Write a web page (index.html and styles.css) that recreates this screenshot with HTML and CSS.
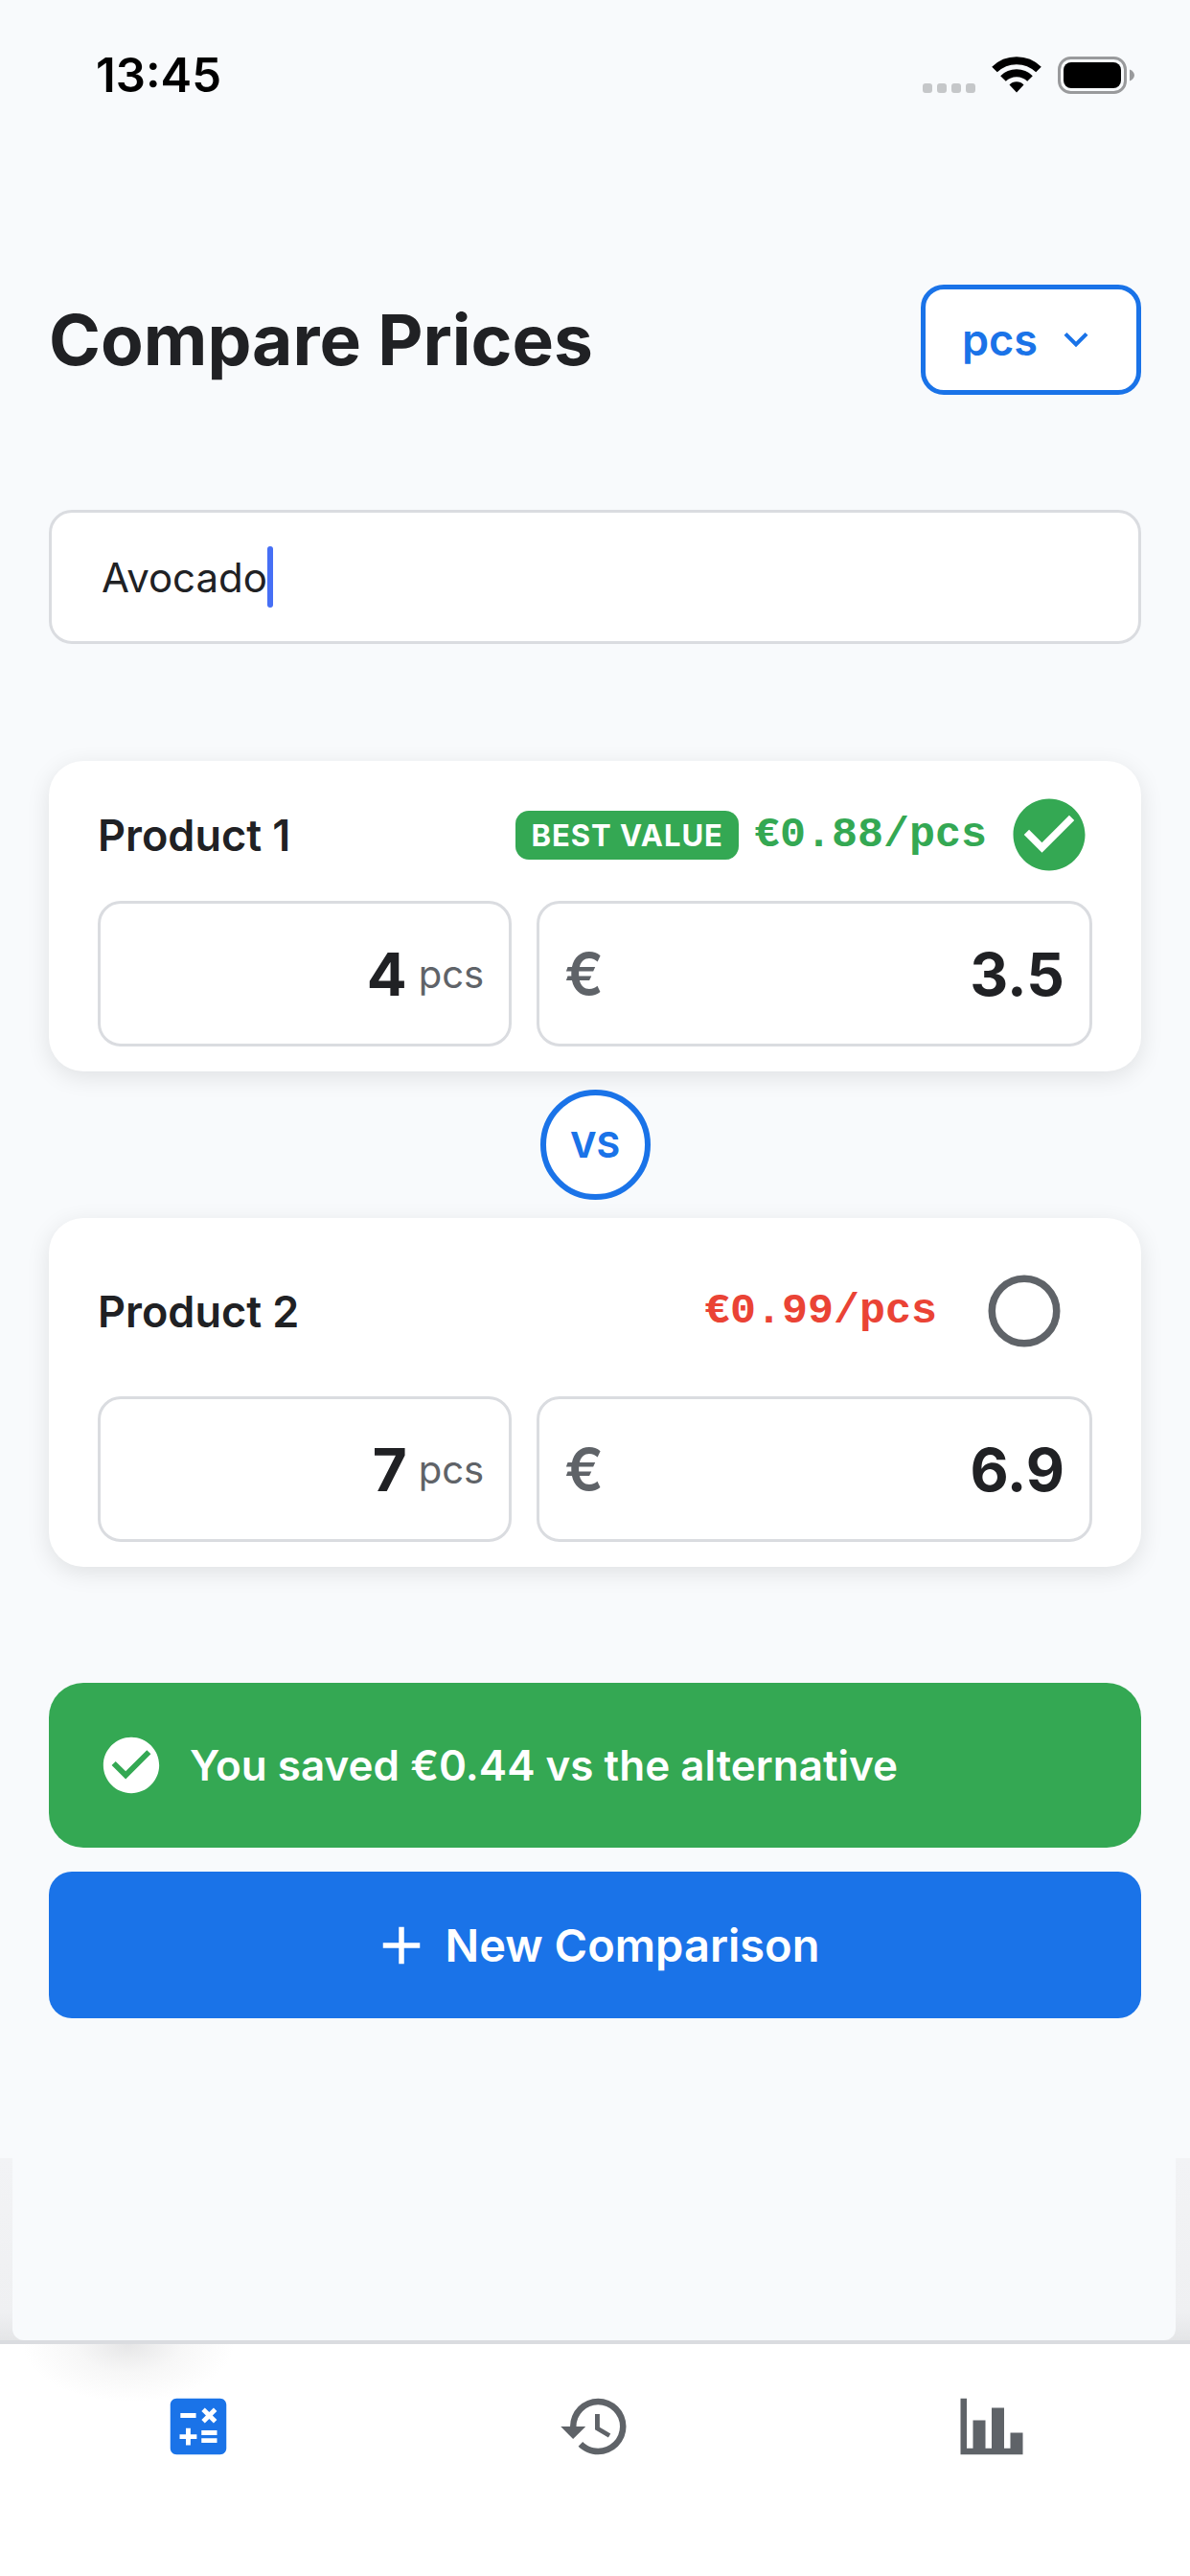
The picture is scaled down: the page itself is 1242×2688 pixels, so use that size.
FILE: index.html
```html
<!DOCTYPE html>
<html lang="en">
<head>
	<meta charset="UTF-8">
	<meta name="viewport" content="width=device-width, initial-scale=1">
	<title>Compare Prices</title>
	<link rel="stylesheet" href="styles.css">
</head>
<body>

	<div class="status-bar">
		<time class="clock">13:45</time>
		<div class="status-icons">
			<svg class="signal" viewBox="0 0 55 40" aria-hidden="true">
				<rect x="0" y="29" width="10" height="10" rx="3"/>
				<rect x="15" y="29" width="10" height="10" rx="3"/>
				<rect x="30" y="29" width="10" height="10" rx="3"/>
				<rect x="45" y="29" width="10" height="10" rx="3"/>
			</svg>
			<svg class="wifi" viewBox="0 0 52 40" aria-hidden="true">
				<path d="M3 14.500A33 33 0 0 1 49 14.500" fill="none" stroke="#000" stroke-width="8"/>
				<path d="M12 24A20 20 0 0 1 40 24" fill="none" stroke="#000" stroke-width="8"/>
				<path d="M18.500 30.500A10.500 10.500 0 0 1 33.500 30.500L26 38.500Z"/>
			</svg>
			<svg class="battery" viewBox="0 0 80 40" aria-hidden="true">
				<rect x="1.500" y="2.500" width="69" height="36" rx="12" fill="none" stroke="#999a9c" stroke-width="3"/>
				<rect x="6" y="7" width="60" height="27" rx="8"/>
				<path d="M75 14.500C78 15.500 80 18 80 20.500S78 25.500 75 26.500Z" fill="#999a9c"/>
			</svg>
		</div>
	</div>

	<main>
		<header class="page-header">
			<h1>Compare Prices</h1>
			<div class="unit-picker">
				<select name="unit" aria-label="Unit">
					<option value="pcs" selected>pcs</option>
					<option value="kg">kg</option>
					<option value="g">g</option>
					<option value="l">l</option>
					<option value="ml">ml</option>
				</select>
				<svg viewBox="0 0 24 24" aria-hidden="true"><path d="M7.410 8.580L12 13.170L16.590 8.580L18 10L12 16L6 10Z"/></svg>
			</div>
		</header>

		<div class="name-field">
			<input type="text" name="name" value="Avocado" aria-label="Product name">
			<span class="caret"></span>
		</div>

		<section class="card">
			<div class="card-header">
				<h2>Product 1</h2>
				<span class="badge">BEST VALUE</span>
				<span class="unit-price good">€0.88/pcs</span>
				<button type="button" class="pick picked" aria-label="Product 1 selected">
					<svg viewBox="0 0 24 24" aria-hidden="true"><path d="M12 2C6.500 2 2 6.500 2 12S6.500 22 12 22 22 17.500 22 12 17.500 2 12 2M10 17L5 12L6.410 10.590L10 14.170L17.590 6.580L19 8L10 17Z"/></svg>
				</button>
			</div>
			<div class="fields">
				<label class="field">
					<input type="text" name="amount-1" value="4" inputmode="decimal" aria-label="Product 1 amount">
					<span class="unit">pcs</span>
				</label>
				<label class="field">
					<span class="currency">€</span>
					<input type="text" name="price-1" value="3.5" inputmode="decimal" aria-label="Product 1 price">
				</label>
			</div>
		</section>

		<div class="vs">VS</div>

		<section class="card">
			<div class="card-header">
				<h2>Product 2</h2>
				<span class="unit-price bad">€0.99/pcs</span>
				<button type="button" class="pick" aria-label="Select product 2">
					<svg viewBox="0 0 24 24" aria-hidden="true"><circle cx="12" cy="12" r="9" fill="none" stroke="currentColor" stroke-width="2"/></svg>
				</button>
			</div>
			<div class="fields">
				<label class="field">
					<input type="text" name="amount-2" value="7" inputmode="decimal" aria-label="Product 2 amount">
					<span class="unit">pcs</span>
				</label>
				<label class="field">
					<span class="currency">€</span>
					<input type="text" name="price-2" value="6.9" inputmode="decimal" aria-label="Product 2 price">
				</label>
			</div>
		</section>

		<div class="savings">
			<svg viewBox="0 0 24 24" aria-hidden="true"><path d="M12 2C6.500 2 2 6.500 2 12S6.500 22 12 22 22 17.500 22 12 17.500 2 12 2M10 17L5 12L6.410 10.590L10 14.170L17.590 6.580L19 8L10 17Z"/></svg>
			<span>You saved €0.44 vs the alternative</span>
		</div>

		<button type="button" class="new-comparison">
			<svg viewBox="0 0 24 24" aria-hidden="true"><path d="M19 13H13V19H11V13H5V11H11V5H13V11H19Z"/></svg>
			New Comparison
		</button>
	</main>

	<div class="sheet-edge"><div class="sheet"></div></div>

	<nav class="tabs">
		<a href="#compare" class="active" aria-label="Compare">
			<svg viewBox="0 0 24 24" aria-hidden="true"><path d="M19 3H5C3.900 3 3 3.900 3 5V19C3 20.100 3.900 21 5 21H19C20.100 21 21 20.100 21 19V5C21 3.900 20.100 3 19 3M13.030 7.060L14.090 6L15.500 7.410L16.910 6L17.970 7.060L16.560 8.470L17.970 9.880L16.910 10.940L15.500 9.530L14.090 10.940L13.030 9.880L14.440 8.470L13.030 7.060M6.250 7.720H11.250V9.220H6.250V7.720M11.500 16H9.500V18H8V16H6V14.500H8V12.500H9.500V14.500H11.500V16M18 17.250H13V15.750H18V17.250M18 14.750H13V13.250H18V14.750Z"/></svg>
		</a>
		<a href="#history" aria-label="History">
			<svg viewBox="0 0 24 24" aria-hidden="true"><path d="M13.500 8H12V13L16.280 15.540L17 14.330L13.500 12.250V8M13 3A9 9 0 0 0 4 12H1L4.960 16.030L9 12H6A7 7 0 0 1 13 5A7 7 0 0 1 20 12A7 7 0 0 1 13 19C11.070 19 9.320 18.210 8.060 16.940L6.640 18.360C8.270 20 10.500 21 13 21A9 9 0 0 0 22 12A9 9 0 0 0 13 3"/></svg>
		</a>
		<a href="#stats" aria-label="Statistics">
			<svg viewBox="0 0 24 24" aria-hidden="true"><path d="M22 21H2V3H4V19H6V10H10V19H12V6H16V19H18V14H22V21Z"/></svg>
		</a>
	</nav>

</body>
</html>
```
FILE: styles.css
```css
* {
	box-sizing: border-box;
}
body {
	margin: 0;
	min-height: 100vh;
	display: flex;
	flex-direction: column;
	background-color: #f8fafc;
	color: #202124;
	font-family: Inter, "Liberation Sans", sans-serif;
	font-size: 45px;
}
h1,
h2 {
	margin: 0;
}
svg {
	display: block;
	flex: none;
	fill: currentColor;
}
input,
select,
button {
	margin: 0;
	padding: 0;
	border: none;
	outline: none;
	background: none;
	color: inherit;
	font: inherit;
}
button,
select {
	cursor: pointer;
}

/* status bar */
.status-bar {
	padding: 0 58px 0 100px;
	height: 156px;
	display: flex;
	align-items: center;
	justify-content: space-between;
	color: #000;
}
.clock {
	font-size: 49px;
	font-weight: 600;
}
.status-icons {
	display: flex;
	gap: 17px;
}
.status-icons svg {
	height: 40px;
}
.signal {
	width: 55px;
	color: #c5c7c9;
}
.wifi {
	width: 52px;
}
.battery {
	width: 80px;
}

main {
	flex: 1;
	padding: 141px 51px 0;
}

/* header */
.page-header {
	margin-bottom: 120px;
	display: flex;
	align-items: center;
	justify-content: space-between;
}
h1 {
	font-size: 73px;
	font-weight: 700;
}
.unit-picker {
	position: relative;
	color: #1a73e8;
}
.unit-picker select {
	padding: 0 102px 0 38px;
	height: 115px;
	border: 5px solid #1a73e8;
	border-radius: 24px;
	background-color: #fff;
	font-weight: 600;
	appearance: none;
}
.unit-picker svg {
	position: absolute;
	top: 32px;
	right: 43px;
	width: 50px;
	pointer-events: none;
}

/* product name */
.name-field {
	position: relative;
	margin-bottom: 122px;
}
.name-field input {
	padding: 0 52px;
	width: 100%;
	height: 140px;
	display: block;
	border: 3px solid #dadce0;
	border-radius: 24px;
	background-color: #fff;
	font-size: 42px;
}
.caret {
	position: absolute;
	top: 38px;
	left: 228px;
	width: 6px;
	height: 64px;
	border-radius: 3px;
	background-color: #466ff5;
}

/* product cards */
.card {
	padding: 26px 51px;
	border-radius: 36px;
	background-color: #fff;
	box-shadow: 0 6px 24px rgba(0, 0, 0, .1);
}
.card-header {
	margin-bottom: 18px;
	display: flex;
	align-items: center;
}
h2 {
	flex: 1;
	font-size: 45px;
	font-weight: 600;
}
.badge {
	margin-right: 16px;
	padding: 0 16px;
	border-radius: 14px;
	background-color: #34a853;
	color: #fff;
	font-size: 31px;
	font-weight: 700;
	line-height: 51px;
	letter-spacing: 1px;
}
.unit-price {
	margin-right: 20px;
	font-family: "Courier New", "Liberation Mono", monospace;
	font-size: 45px;
	font-weight: 700;
}
.good {
	color: #34a853;
}
.bad {
	color: #ea4335;
}
.pick {
	padding: 26px;
	color: #5f6368;
}
.pick svg {
	width: 90px;
}
.picked {
	padding: 6px 0;
	color: #34a853;
}
.fields {
	display: grid;
	grid-template-columns: minmax(0, 41fr) minmax(0, 55fr);
	gap: 26px;
}
.field {
	padding: 0 26px;
	height: 152px;
	display: flex;
	align-items: center;
	border: 3px solid #dadce0;
	border-radius: 24px;
}
.field input {
	flex: 1;
	min-width: 0;
	font-size: 62px;
	font-weight: 700;
	text-align: right;
}
.unit {
	margin-left: 12px;
	color: #5f6368;
	font-size: 40px;
}
.currency {
	color: #5f6368;
	font-size: 60px;
	font-weight: 600;
}
.vs {
	margin: 19px auto;
	width: 115px;
	height: 115px;
	display: flex;
	align-items: center;
	justify-content: center;
	border: 6px solid #1a73e8;
	border-radius: 50%;
	background-color: #fff;
	color: #1a73e8;
	font-size: 37px;
	font-weight: 700;
}

/* result */
.savings {
	margin: 121px 0 25px;
	padding: 51px;
	display: flex;
	align-items: center;
	gap: 26px;
	border-radius: 36px;
	background-color: #34a853;
	color: #fff;
	font-size: 44px;
	font-weight: 600;
}
.savings svg {
	width: 70px;
}
.new-comparison {
	width: 100%;
	height: 153px;
	display: flex;
	align-items: center;
	justify-content: center;
	gap: 12px;
	border-radius: 24px;
	background-color: #1a73e8;
	color: #fff;
	font-size: 47px;
	font-weight: 600;
}
.new-comparison svg {
	width: 66px;
}

/* lower edge of the page sheet above the tabs */
.sheet-edge {
	padding: 0 15px 0 13px;
	background: linear-gradient(#f2f3f5, #eff0f2 85%, #e4e5e7);
}
.sheet {
	height: 190px;
	border-radius: 0 0 12px 12px;
	background-color: #f8fafc;
}

.tabs {
	padding-top: 47px;
	height: 246px;
	display: flex;
	border-top: 4px solid #dadce0;
	background: radial-gradient(110px 60px at 134px 0, #e6e6e7, #f7f7f7 50%, #fff) #fff;
}
.tabs a {
	flex: 1;
	color: #5f6368;
}
.tabs svg {
	margin: 0 auto;
	width: 78px;
}
.tabs .active {
	color: #1a73e8;
}
```
